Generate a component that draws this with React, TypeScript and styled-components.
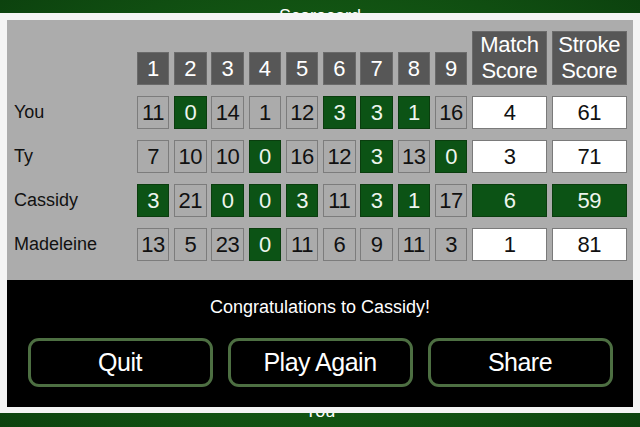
import React from "react";
import styled, { createGlobalStyle } from "styled-components";

const Global = createGlobalStyle`
  html, body { margin: 0; padding: 0; }
  body {
    width: 640px;
    height: 427px;
    overflow: hidden;
    font-family: "Liberation Sans", Arial, sans-serif;
  }
`;

const Screen = styled.div`
  position: relative;
  width: 640px;
  height: 427px;
  overflow: hidden;
  background: radial-gradient(ellipse at center, #1c6b1c 0%, #145a14 55%, #0c420e 100%);
  display: flex;
  flex-direction: column;
  justify-content: space-between;
  align-items: center;
`;

const BackTitle = styled.div`
  color: #ffffff;
  font-size: 18px;
  line-height: 18px;
  margin-top: 7px;
`;

const BackFooter = styled.div`
  color: #ffffff;
  font-size: 18px;
  line-height: 18px;
  margin-bottom: 7px;
`;

const Modal = styled.div`
  position: absolute;
  left: 0;
  top: 13px;
  width: 640px;
  height: 400px;
  box-sizing: border-box;
  background: #f4f4f4;
  padding: 7px 7px 6px 7px;
  display: flex;
  flex-direction: column;
`;

const Panel = styled.div`
  height: 260px;
  box-sizing: border-box;
  background: #acacac;
  padding-top: 11px;
  display: grid;
  grid-template-columns: 125px repeat(9, 32.5px) 75px 75px;
  grid-auto-rows: 33px;
  grid-template-rows: 54px;
  column-gap: 4.75px;
  row-gap: 11px;
  align-items: end;
`;

const Blank = styled.div``;

const Head = styled.div<{ $tall?: boolean }>`
  background: #575757;
  border: 1px solid #6a6a6a;
  box-sizing: border-box;
  height: ${(p) => (p.$tall ? "54px" : "33px")};
  color: #ffffff;
  font-size: 22px;
  line-height: 26px;
  display: flex;
  align-items: center;
  justify-content: center;
  text-align: center;
  letter-spacing: -0.3px;
`;

const Name = styled.div`
  align-self: center;
  padding-left: 7px;
  font-size: 18px;
  color: #111;
`;

type Kind = "plain" | "win" | "white";

const Cell = styled.div<{ $kind: Kind }>`
  box-sizing: border-box;
  height: 33px;
  border: 1.5px solid
    ${(p) => (p.$kind === "win" ? "#0a3d0e" : p.$kind === "white" ? "#7a7a7a" : "#7c7c7c")};
  background: ${(p) =>
    p.$kind === "win" ? "#0c5315" : p.$kind === "white" ? "#ffffff" : "#ababab"};
  color: ${(p) => (p.$kind === "win" ? "#eef5ee" : "#111")};
  font-size: 22px;
  display: flex;
  align-items: center;
  justify-content: center;
  letter-spacing: -0.5px;
`;

const Bottom = styled.div`
  flex: 1;
  background: #000;
  display: flex;
  flex-direction: column;
  align-items: center;
`;

const Congrats = styled.div`
  color: #fff;
  font-size: 18px;
  margin-top: 17px;
  line-height: 20px;
`;

const Buttons = styled.div`
  display: flex;
  gap: 15px;
  margin-top: 21px;
`;

const Button = styled.button`
  width: 185px;
  height: 49px;
  box-sizing: border-box;
  background: #000;
  border: 3px solid #4d6f42;
  border-radius: 11px;
  color: #fff;
  font-family: "Liberation Sans", Arial, sans-serif;
  font-size: 25px;
  letter-spacing: -0.5px;
  display: flex;
  align-items: center;
  justify-content: center;
  padding: 0;
`;

type Row = { name: string; holes: [number, boolean][]; match: number; stroke: number; winner?: boolean };

const rows: Row[] = [
  {
    name: "You",
    holes: [[11, false], [0, true], [14, false], [1, false], [12, false], [3, true], [3, true], [1, true], [16, false]],
    match: 4,
    stroke: 61,
  },
  {
    name: "Ty",
    holes: [[7, false], [10, false], [10, false], [0, true], [16, false], [12, false], [3, true], [13, false], [0, true]],
    match: 3,
    stroke: 71,
  },
  {
    name: "Cassidy",
    holes: [[3, true], [21, false], [0, true], [0, true], [3, true], [11, false], [3, true], [1, true], [17, false]],
    match: 6,
    stroke: 59,
    winner: true,
  },
  {
    name: "Madeleine",
    holes: [[13, false], [5, false], [23, false], [0, true], [11, false], [6, false], [9, false], [11, false], [3, false]],
    match: 1,
    stroke: 81,
  },
];

export default function App() {
  return (
    <>
      <Global />
      <Screen>
        <BackTitle>Scorecard</BackTitle>
        <BackFooter>You</BackFooter>
        <Modal>
          <Panel>
            <Blank />
            {[1, 2, 3, 4, 5, 6, 7, 8, 9].map((h) => (
              <Head key={h}>{h}</Head>
            ))}
            <Head $tall>
              Match
              <br />
              Score
            </Head>
            <Head $tall>
              Stroke
              <br />
              Score
            </Head>
            {rows.map((r) => (
              <React.Fragment key={r.name}>
                <Name>{r.name}</Name>
                {r.holes.map(([v, w], i) => (
                  <Cell key={i} $kind={w ? "win" : "plain"}>
                    {v}
                  </Cell>
                ))}
                <Cell $kind={r.winner ? "win" : "white"}>{r.match}</Cell>
                <Cell $kind={r.winner ? "win" : "white"}>{r.stroke}</Cell>
              </React.Fragment>
            ))}
          </Panel>
          <Bottom>
            <Congrats>Congratulations to Cassidy!</Congrats>
            <Buttons>
              <Button>Quit</Button>
              <Button>Play Again</Button>
              <Button>Share</Button>
            </Buttons>
          </Bottom>
        </Modal>
      </Screen>
    </>
  );
}
